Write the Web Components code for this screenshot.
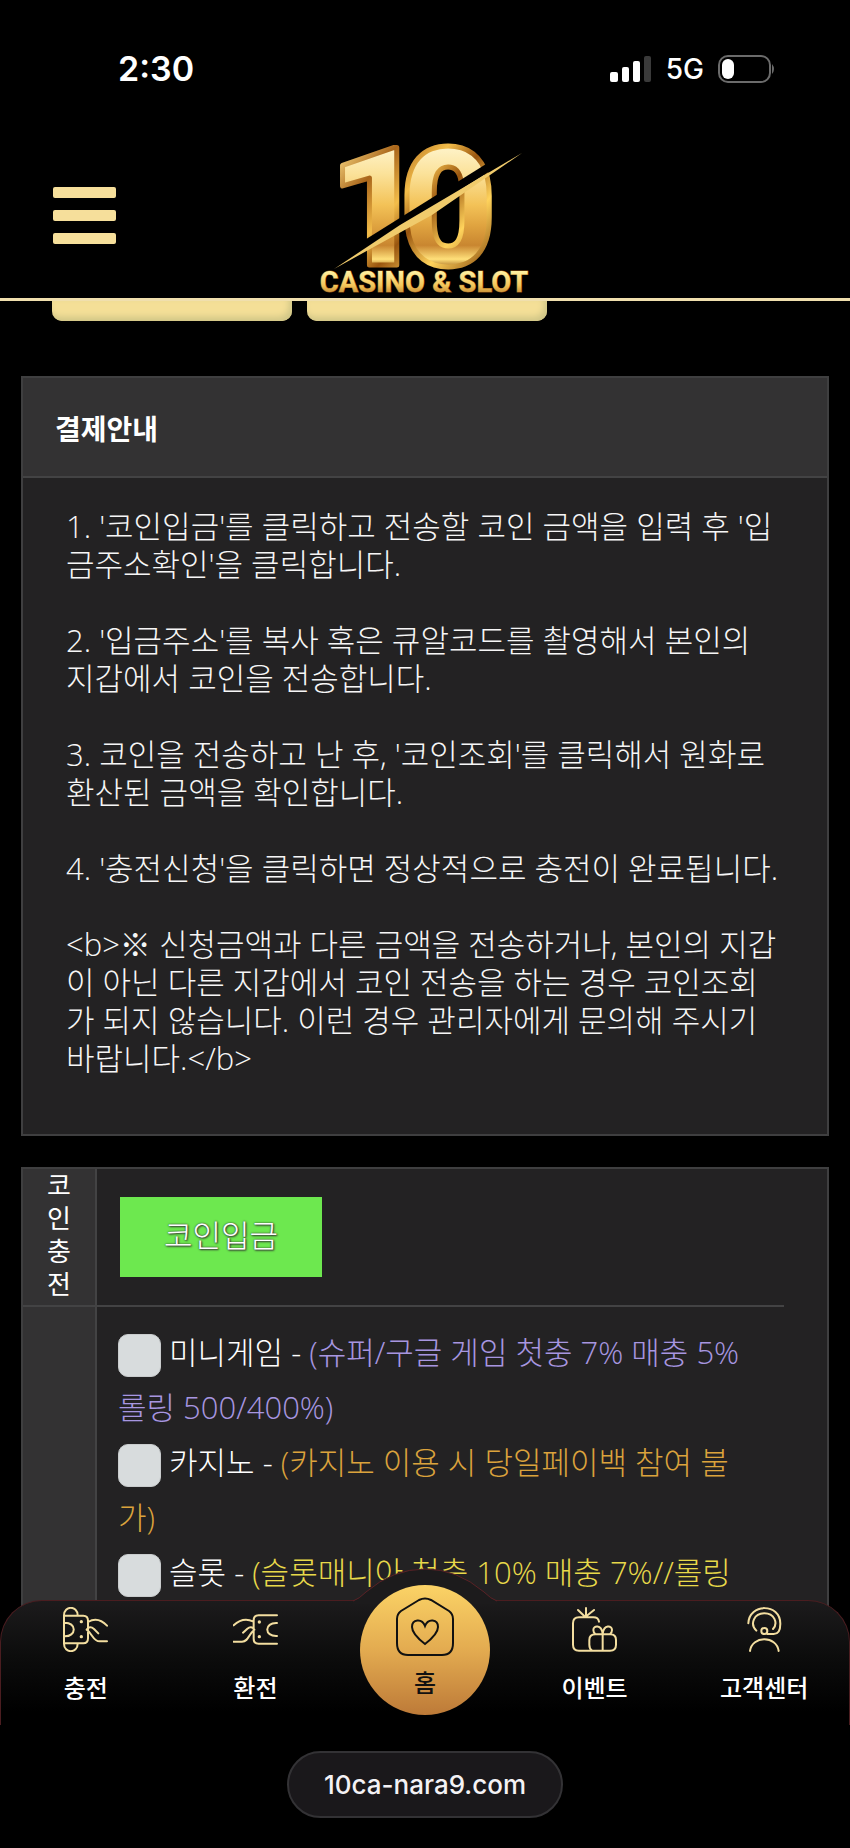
<!DOCTYPE html>
<html lang="ko">
<head>
<meta charset="utf-8">
<meta name="viewport" content="width=device-width, initial-scale=1">
<title>10 CASINO &amp; SLOT</title>
<style>
  html, body { margin: 0; height: 100%; background: #000; }
  body { font-family: Inter, "Noto Sans CJK KR", sans-serif; color: #fff; }
</style>
</head>
<body>
<casino-app></casino-app>

<script>
const define = (name, html) => {
  const template = document.createElement('template');
  template.innerHTML = html;
  customElements.define(name, class extends HTMLElement {
    constructor() {
      super();
      this.attachShadow({ mode: 'open' }).append(template.content.cloneNode(true));
    }
  });
};

define('status-bar', `
  <style>
    :host { display: flex; box-sizing: border-box; height: 132px; padding: 6px 74px 0 118px; align-items: center; justify-content: space-between; }
    .time { font-size: 34px; font-weight: 600; line-height: 40px; }
    .right { display: flex; align-items: center; gap: 14px; font-size: 28px; font-weight: 500; line-height: 32px; }
    svg { display: block; }
  </style>
  <span class="time">2:30</span>
  <div class="right">
    <svg width="42" height="28" viewBox="0 0 42 28" aria-hidden="true">
      <rect x="0" y="17" width="8" height="10" rx="2" fill="#fff"/>
      <rect x="12" y="12" width="7" height="15" rx="2" fill="#fff"/>
      <rect x="23" y="6" width="7" height="21" rx="2" fill="#fff"/>
      <rect x="34" y="1" width="7" height="26" rx="2" fill="#3a3a3a"/>
    </svg>
    <span>5G</span>
    <svg width="58" height="28" viewBox="0 0 58 28" aria-hidden="true">
      <rect x="1" y="1" width="51" height="26" rx="9" fill="none" stroke="#6b6b6b" stroke-width="2"/>
      <rect x="4" y="4" width="12" height="20" rx="6" fill="#fff"/>
      <path d="M54 9q4 5 0 10z" fill="#6b6b6b"/>
    </svg>
  </div>`);

define('brand-logo', `
  <style>:host { display: block; } svg { display: block; overflow: visible; }</style>
  <svg width="220" height="166" viewBox="315 132 220 166" role="img" aria-label="10 CASINO &amp; SLOT">
    <defs>
      <linearGradient id="g" gradientUnits="userSpaceOnUse" x1="420" y1="142" x2="420" y2="268">
        <stop offset="0" stop-color="#fff6d2"/><stop offset=".25" stop-color="#fbe29a"/>
        <stop offset=".5" stop-color="#f3c257"/><stop offset=".66" stop-color="#e0a440"/>
        <stop offset=".82" stop-color="#c98630"/><stop offset=".93" stop-color="#ffe07a"/><stop offset="1" stop-color="#a5681a"/>
      </linearGradient>
      <linearGradient id="e" gradientUnits="userSpaceOnUse" x1="350" y1="142" x2="490" y2="268">
        <stop offset="0" stop-color="#f5d37c"/><stop offset=".2" stop-color="#a9651a"/>
        <stop offset=".4" stop-color="#f3bd4a"/><stop offset=".55" stop-color="#99550f"/>
        <stop offset=".75" stop-color="#ffd35c"/><stop offset="1" stop-color="#8a4c0c"/>
      </linearGradient>
      <linearGradient id="t" x1="0" y1="0" x2="0" y2="1">
        <stop offset=".2" stop-color="#fff0a0"/><stop offset=".6" stop-color="#f3c65a"/><stop offset="1" stop-color="#a8641c"/>
      </linearGradient>
    </defs>
    <g font-family="Roboto, sans-serif">
      <text x="329 400" y="265" font-size="166" font-weight="900" fill="url(#g)" stroke="url(#e)" stroke-width="5" stroke-linejoin="round">10</text>
      <path d="M350 254L505 157" stroke="#000" stroke-width="8"/>
      <path d="M334 269L400 225L522 153L432 215L372 248Z" fill="#f0cb6c"/>
      <text x="424" y="292" font-size="29" font-weight="700" text-anchor="middle" fill="url(#t)" stroke="#8e5114" stroke-width="1" paint-order="stroke">CASINO &amp; SLOT</text>
    </g>
  </svg>`);

define('site-header', `
  <style>
    :host { display: grid; grid-template-columns: 1fr auto 1fr; align-items: center; border-bottom: 3px solid #f0dfae; }
    button { justify-self: start; margin: 0 0 0 53px; padding: 0; border: 0; background: none; display: flex; flex-direction: column; gap: 12px; width: 63px; }
    i { display: block; width: 100%; height: 11px; border-radius: 2px; background: #f6df9b; }
  </style>
  <button type="button" aria-label="메뉴"><i></i><i></i><i></i></button>
  <slot></slot>`);

define('tab-strip', `
  <style>
    :host { display: flex; gap: 15px; padding: 0 52px; }
    button { width: 240px; height: 20px; padding: 0; border: 0; border-radius: 0 0 10px 10px; background: #f4df97; box-shadow: inset -3px -4px 6px #d0c687; }
  </style>
  <button type="button" aria-label="원화 충전"></button>
  <button type="button" aria-label="코인 충전"></button>`);

define('notice-panel', `
  <style>
    :host { display: block; margin: 0 21px; border: 2px solid #3f3f40; background: #232223; }
    h2 { margin: 0; padding: 34px 32px 28px; border-bottom: 2px solid #434344; background: #333233; font-size: 28px; line-height: 36px; font-weight: 700; }
    .body { padding: 29px 40px 57px 43px; font-family: "Open Sans", "Noto Sans CJK KR", sans-serif; font-size: 31px; line-height: 38px; font-weight: 300; color: #f6f6f6; }
  </style>
  <h2><slot name="title"></slot></h2>
  <div class="body"><slot></slot></div>`);

define('charge-option', `
  <style>
    :host { display: block; white-space: nowrap; font-size: 31px; line-height: 55px; font-weight: 300; }
    input { appearance: none; box-sizing: border-box; width: 43px; height: 43px; margin: 0; border-radius: 10px; border: 1px solid #c9cccd; background: #d8dcdd; vertical-align: middle; }
  </style>
  <input type="checkbox" id="c"> <label for="c"><slot></slot></label>`);

define('charge-form', `
  <style>
    :host { display: block; margin: 0 21px; padding-right: 43px; border: 2px solid #3f3f40; background: #232223; font-family: "Open Sans", "Noto Sans CJK KR", sans-serif; }
    table { width: 100%; border-spacing: 0; }
    th { width: 26px; padding: 0 23px 2px; background: #333233; font-size: 26px; line-height: 33px; font-weight: 400; word-break: break-all; vertical-align: top; }
    td { padding: 0 0 0 23px; border-left: 2px solid #434344; }
    tr:first-child > * { height: 134px; border-bottom: 2px solid #434344; }
    .options { padding: 18px 0 120px 21px; }
    .coin { display: block; width: 202px; height: 80px; padding: 0 0 8px; border: 0; background: #6de84f; color: #fff; font: inherit; font-size: 31px; font-weight: 300; text-shadow: 0 0 2px #333, 1px 1px 2px #333; }
    .p { color: #a796e0; } .o { color: #dba33c; } .y { color: #e8d94a; }
  </style>
  <table>
    <tr><th scope="row">코인충전</th><td><button class="coin" type="button">코인입금</button></td></tr>
    <tr><th></th><td class="options">
      <charge-option>미니게임 - <span class="p">(슈퍼/구글 게임 첫충 7% 매충 5%<br>롤링 500/400%)</span></charge-option>
      <charge-option>카지노 - <span class="o">(카지노 이용 시 당일페이백 참여 불<br>가)</span></charge-option>
      <charge-option>슬롯 - <span class="y">(슬롯매니아 첫충 10% 매충 7%//롤링</span></charge-option>
    </td></tr>
  </table>`);

define('nav-item', `
  <style>
    :host { flex: 1 1 0; min-width: 0; }
    a { display: flex; flex-direction: column; align-items: center; gap: 19px; padding-top: 6px; color: #fff; text-decoration: none; font-size: 24px; line-height: 36px; font-weight: 500; white-space: nowrap; }
    ::slotted(svg) { display: block; width: 45px; height: 45px; fill: none; stroke: #f3dea0; stroke-width: 6px; stroke-linecap: round; stroke-linejoin: round; }
  </style>
  <a href="#"><slot name="icon"></slot><span><slot></slot></span></a>`);

define('home-item', `
  <style>
    :host { flex: 1 1 0; min-width: 0; display: flex; justify-content: center; position: relative; }
    .bump { position: absolute; left: 50%; margin-left: -72px; top: -33px; }
    a { position: absolute; top: -16px; width: 130px; height: 130px; box-sizing: border-box; padding-top: 12px; border-radius: 50%; display: flex; flex-direction: column; align-items: center; gap: 10px; background: linear-gradient(#fbd366, #e3ab50 50%, #bd7a38); color: #111; font-size: 24px; line-height: 34px; font-weight: 500; text-decoration: none; }
    svg { display: block; }
  </style>
  <svg class="bump" width="144" height="36" viewBox="0 0 144 36" aria-hidden="true">
    <path d="M0 36V33Q6 31 13 24Q40 1 72 1T131 24Q138 31 144 33V36Z" fill="#1c1b1c"/>
    <path d="M0 33Q6 31 13 24Q40 1 72 1T131 24Q138 31 144 33" fill="none" stroke="#5b2226" stroke-width="1"/>
  </svg>
  <a href="#">
    <svg width="60" height="60" viewBox="0 0 60 60" fill="none" stroke="#111" stroke-width="2" aria-hidden="true">
      <path d="M24 3L6 14Q2 17 2 22V46Q2 58 13 58H47Q58 58 58 46V22Q58 17 54 14L36 3Q30 0 24 3Z"/>
      <path d="M30 47Q17 37 17 30C17 22 27 21 30 29C33 21 43 22 43 30Q43 37 30 47Z"/>
    </svg>
    <span><slot></slot></span>
  </a>`);

define('bottom-nav', `
  <style>
    :host { display: flex; box-sizing: border-box; height: 125px; border: 1px solid #4b1d20; border-bottom: 0; border-radius: 42px 42px 0 0; background: linear-gradient(#1c1b1c, #0c0c0c 45%, #000 90%); }
  </style>
  <slot></slot>`);

define('address-pill', `
  <style>
    :host { display: flex; justify-content: center; padding: 26px 0 30px; background: #000; }
    a { box-sizing: border-box; height: 67px; padding: 0 35px; border: 2px solid #333235; border-radius: 34px; background: #1a181b; color: #f4f2f5; text-decoration: none; font-size: 26px; font-weight: 500; line-height: 63px; }
  </style>
  <a href="#"><slot></slot></a>`);

define('casino-app', `
  <style>
    :host { display: flex; flex-direction: column; height: 100vh; position: relative; overflow: hidden; background: #000; }
    main { flex: 1; min-height: 0; overflow: hidden; }
    notice-panel { margin-top: 55px; margin-bottom: 31px; }
    footer { position: absolute; left: 0; right: 0; bottom: 0; }
    p { margin: 0 0 38px; white-space: nowrap; }
    p:last-child { margin: 0; }
  </style>
  <status-bar></status-bar>
  <site-header><brand-logo></brand-logo></site-header>
  <main>
    <tab-strip></tab-strip>
    <notice-panel>
      <span slot="title">결제안내</span>
      <p>1. '코인입금'를 클릭하고 전송할 코인 금액을 입력 후 '입<br>금주소확인'을 클릭합니다.</p>
      <p>2. '입금주소'를 복사 혹은 큐알코드를 촬영해서 본인의<br>지갑에서 코인을 전송합니다.</p>
      <p>3. 코인을 전송하고 난 후, '코인조회'를 클릭해서 원화로<br>환산된 금액을 확인합니다.</p>
      <p>4. '충전신청'을 클릭하면 정상적으로 충전이 완료됩니다.</p>
      <p>&lt;b&gt;※ 신청금액과 다른 금액을 전송하거나, 본인의 지갑<br>이 아닌 다른 지갑에서 코인 전송을 하는 경우 코인조회<br>가 되지 않습니다. 이런 경우 관리자에게 문의해 주시기<br>바랍니다.&lt;/b&gt;</p>
    </notice-panel>
    <charge-form></charge-form>
  </main>
  <footer>
    <bottom-nav>
      <nav-item>
        <svg slot="icon" viewBox="188 140 135 135" aria-hidden="true"><path d="M191 165V250M191 165C191 135 232 135 232 165M191 250C191 280 232 280 232 250M191 166H249Q263 166 263 181V234Q263 249 249 249H191M191 187C230 185 230 230 191 228M263 185C285 172 302 177 320 196M294 219L281 206Q268 195 259 208C278 222 278 243 298 243H320"/><g fill="#f3dea0" stroke="none"><circle cx="243" cy="184" r="5"/><circle cx="243" cy="229" r="5"/></g></svg>충전</nav-item>
      <nav-item>
        <svg slot="icon" viewBox="697 140 135 135" aria-hidden="true"><path d="M829 165H774Q759 165 759 180V235Q759 250 774 250H829M829 188C790 186 790 229 829 227M757 183C735 173 717 178 699 195M727 217L740 205Q752 195 761 208C743 222 744 244 724 244H699"/><g fill="#f3dea0" stroke="none"><circle cx="776" cy="185" r="5"/><circle cx="776" cy="229" r="5"/></g></svg>환전</nav-item>
      <home-item>홈</home-item>
      <nav-item>
        <svg slot="icon" viewBox="442 140 135 135" aria-hidden="true"><path d="M523 184Q521 171 506 171H463Q445 171 445 189V253Q445 271 463 271H556Q574 271 574 253V239Q574 222 557 222H512Q494 222 494 239V253Q494 265 502 271M534 222V271M484 143V170M460 149L482 170L508 149M534 220C530 192 506 195 506 209Q506 217 512 221M534 220C538 192 562 195 562 209Q562 217 556 221"/></svg>이벤트</nav-item>
      <nav-item>
        <svg slot="icon" viewBox="951 140 135 135" aria-hidden="true"><path d="M970 189C972 128 1066 128 1066 190Q1066 221 1046 221H1027M994 211C973 190 988 159 1018 159C1048 159 1060 188 1044 206M975 272C981 225 1055 225 1061 272"/><circle cx="1018" cy="212" r="9"/></svg>고객센터</nav-item>
    </bottom-nav>
    <address-pill>10ca-nara9.com</address-pill>
  </footer>`);
</script>
</body>
</html>
